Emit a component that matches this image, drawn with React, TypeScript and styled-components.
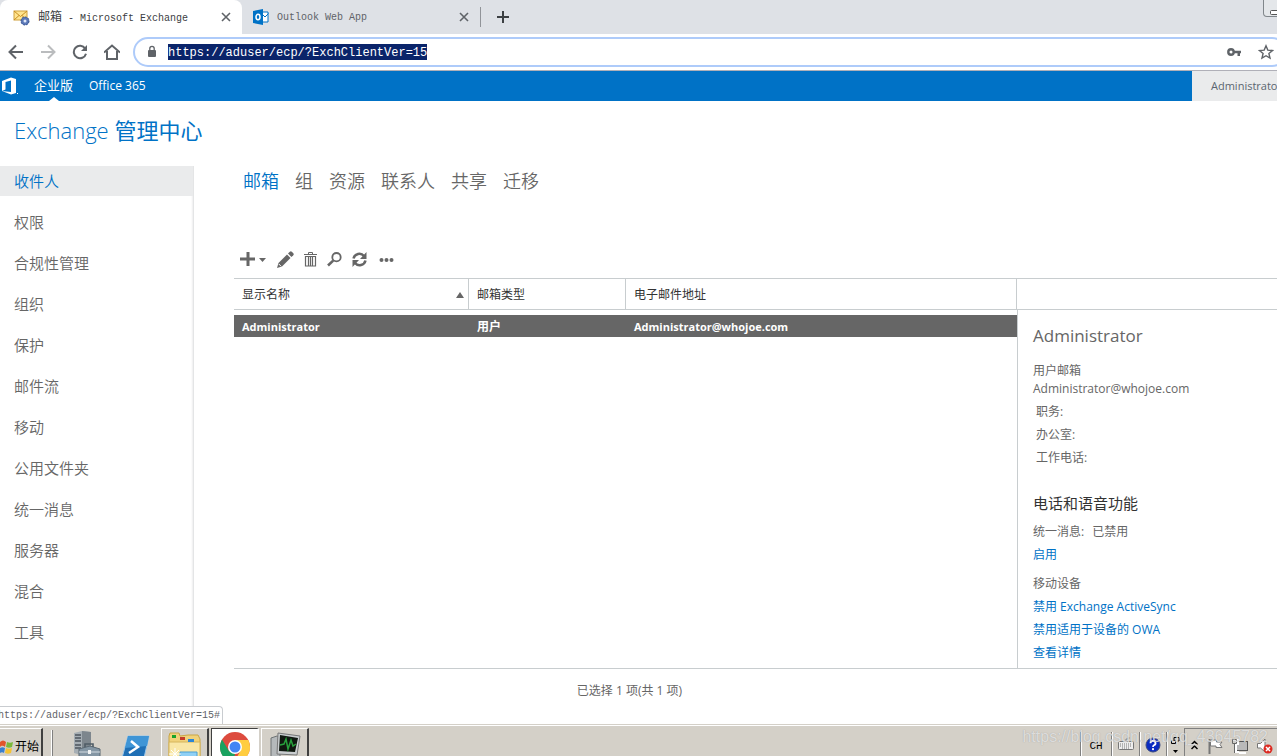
import React from 'react';
import styled, { createGlobalStyle, css } from 'styled-components';

const ui = `'Open Sans', 'Noto Sans CJK SC', sans-serif`;
const mono = `'Liberation Mono', 'Noto Sans CJK SC', monospace`;
const blue = '#0072c6';
const grey = '#666666';
const line = '#c8cdcf';
const face = '#d4d0c8';

const Global = createGlobalStyle`
  * { box-sizing: border-box; }
  html, body, #root { height: 100%; }
  body { margin: 0; overflow: hidden; background: #fff; font: 12px/18px ${ui}; color: ${grey}; }
  button { padding: 0; border: 0; background: none; font: inherit; color: inherit; cursor: pointer; }
  a { color: inherit; text-decoration: none; }
  svg { display: block; flex: none; }
  h1, h2, h3, p, ul, dl, dt, dd { margin: 0; padding: 0; font-weight: 400; list-style: none; }
`;

const Screen = styled.div`
  position: relative;
  display: flex;
  flex-direction: column;
  height: 100vh;
  overflow: hidden;
`;

/* browser window */
const TabStrip = styled.div`
  display: flex;
  flex: none;
  height: 34px;
  background: #dee1e6;
`;
const Tab = styled.div<{ $active?: boolean }>`
  display: flex;
  align-items: center;
  gap: 8px;
  width: ${p => (p.$active ? 242 : 238)}px;
  padding: 0 10px 0 ${p => (p.$active ? 13 : 11)}px;
  border-radius: 8px 8px 0 0;
  background: ${p => (p.$active ? '#fff' : 'transparent')};
  color: ${p => (p.$active ? '#3c4043' : '#5f6368')};
  font: 10px/18px ${mono};
  white-space: pre;
`;
const TabTitle = styled.span`
  flex: 1;
  padding-top: 2px;
`;
const TabCjk = styled.span`
  font-size: 12px;
`;
const IconButton = styled.button`
  display: flex;
  align-items: center;
  justify-content: center;
  color: #5f6368;
`;
const NewTab = styled(IconButton)`
  width: 44px;
  color: #3c4043;
`;
const TabDivider = styled.i`
  width: 1px;
  height: 20px;
  margin-top: 7px;
  background: #919499;
`;
const WindowControl = styled.button`
  position: absolute;
  top: 0;
  right: -12px;
  width: 26px;
  height: 17px;
  padding: 8px 0 0 6px;
  border: 1px solid #80868b;
  border-top: 0;
  border-radius: 0 0 4px 4px;
  background: #e4e7ea;
`;
const AddressRow = styled.div`
  display: flex;
  flex: none;
  align-items: center;
  gap: 16px;
  height: 37px;
  padding-left: 8px;
  border-bottom: 1px solid #b0b0b8;
`;
const AddressBox = styled.div`
  display: flex;
  flex: 1;
  align-items: center;
  gap: 16px;
  height: 30px;
  margin: 0 -10px 0 -3px;
  padding: 0 11px;
  border: 2px solid #aecbfa;
  border-radius: 15px;
`;
const UrlInput = styled.input`
  width: 36ch;
  height: 16px;
  margin: 0 auto 0 -6px;
  padding: 1px 0 0;
  border: 0;
  outline: 0;
  background: #0a246a;
  color: #fff;
  font: 12px/15px ${mono};
`;

/* suite header */
const SuiteBar = styled.header`
  display: flex;
  flex: none;
  align-items: center;
  height: 30px;
  overflow: hidden;
  background: ${blue};
  color: #fff;
  white-space: nowrap;
`;
const SuiteNav = styled.nav`
  display: flex;
  flex: 1;
  align-self: stretch;
  gap: 16px;
  margin-left: 15px;
  font-size: 12px;
  line-height: 29px;
`;
const SuiteLink = styled.a<{ $current?: boolean }>`
  position: relative;
  font-size: ${p => (p.$current ? 13 : 12)}px;
  ${p =>
    p.$current &&
    css`
      &::after {
        content: '';
        position: absolute;
        bottom: 0;
        left: 50%;
        margin-left: -5px;
        border: 5px solid transparent;
        border-top: 0;
        border-bottom: 4px solid #fff;
      }
    `}
`;
const UserButton = styled.button`
  flex: none;
  width: 85px;
  height: 30px;
  padding-left: 19px;
  overflow: hidden;
  background: #eaebec;
  color: #5a6670;
  font-size: 11px;
  text-align: left;
`;

/* page body */
const Title = styled.h1`
  flex: none;
  height: 65px;
  padding: 13px 14px 0;
  color: ${blue};
  font-size: 22px;
  font-weight: 300;
  line-height: 32px;
  b { font-weight: 400; }
`;
const Body = styled.div`
  display: flex;
  flex: 1;
  min-height: 0;
`;
const Sidebar = styled.nav`
  width: 194px;
  flex: none;
  border-right: 1px solid #e4e5e6;
  box-shadow: inset -2px 0 2px -1px #eeeeef;
`;
const SideLink = styled.a<{ $current?: boolean }>`
  display: block;
  height: 30px;
  margin-bottom: 11px;
  padding-left: 14px;
  background: ${p => (p.$current ? '#eaebec' : 'transparent')};
  color: ${p => (p.$current ? blue : grey)};
  font-size: 15px;
  font-weight: 350;
  line-height: 30px;
`;
const Main = styled.main`
  display: flex;
  flex: 1;
  flex-direction: column;
  min-width: 0;
  padding-left: 40px;
`;
const Pivot = styled.nav`
  display: flex;
  gap: 16px;
  height: 72px;
  padding-left: 9px;
  font-size: 18px;
  font-weight: 350;
  line-height: 30px;
`;
const PivotLink = styled.a<{ $current?: boolean }>`
  color: ${p => (p.$current ? blue : grey)};
`;
const Commands = styled.div`
  display: flex;
  align-items: center;
  gap: 10px;
  height: 40px;
  padding: 2px 0 0 6px;
`;
const Command = styled.button`
  display: flex;
  align-items: center;
  height: 20px;
  color: ${grey};
  &:last-child { margin-left: 2px; }
`;
const Split = styled.div`
  display: grid;
  flex: 1;
  grid-template-columns: minmax(0, 1fr) 260px;
  min-height: 0;
  border-top: 1px solid ${line};
  border-bottom: 1px solid ${line};
`;
const Grid = styled.table`
  width: 100%;
  align-self: start;
  border-collapse: separate;
  border-spacing: 0;
  table-layout: fixed;
  tbody::before { content: ''; display: block; height: 5px; }
`;
const HeadCell = styled.th<{ $width?: number }>`
  width: ${p => (p.$width ? p.$width + 'px' : 'auto')};
  height: 31px;
  padding: 2px 4px 0 8px;
  border-right: 1px solid ${line};
  border-bottom: 1px solid ${line};
  color: #333;
  font-weight: 400;
  text-align: left;
`;
const SortLabel = styled.span`
  display: flex;
  align-items: center;
  justify-content: space-between;
`;
const Cell = styled.td`
  height: 22px;
  padding: 2px 8px 0;
  background: ${grey};
  color: #fff;
  font-weight: 700;
`;
const Value = styled.span`
  font-size: 11px;
`;
const Side = styled.div`
  display: flex;
  flex-direction: column;
  min-height: 0;
`;
const SideHead = styled.div`
  flex: none;
  height: 31px;
  border-bottom: 1px solid ${line};
`;
const Details = styled.aside`
  flex: 1;
  min-height: 0;
  padding: 12px 15px 0;
  border-left: 1px solid ${line};
  overflow: hidden;
  line-height: 23px;
`;
const DetailName = styled.h2`
  margin-bottom: 12px;
  font-size: 17px;
  line-height: 28px;
`;
const Kind = styled.p`
  line-height: 18px;
`;
const Fields = styled.ul`
  margin: 2px 0 0 3px;
`;
const DetailHead = styled.h3`
  margin: 22px 0 5px;
  color: #333;
  font-size: 15px;
  line-height: 24px;
`;
const DetailLink = styled.a`
  display: block;
  color: ${blue};
`;
const Group = styled.section`
  margin-bottom: 6px;
`;
const State = styled.span`
  margin-left: 8px;
`;
const Footer = styled.footer`
  flex: none;
  height: 55px;
  padding: 12px 260px 0 8px;
  line-height: 20px;
  text-align: center;
`;
const StatusUrl = styled.div`
  position: absolute;
  left: -4px;
  bottom: 32px;
  height: 18px;
  padding: 0 2px 0 1px;
  border: 1px solid #c9ccd0;
  border-bottom: 0;
  border-radius: 0 4px 0 0;
  background: #fff;
  color: #5f6368;
  font: 10px/18px ${mono};
`;

/* desktop task bar */
const TaskBar = styled.div`
  display: flex;
  flex: none;
  height: 32px;
  padding-top: 4px;
  background: ${face};
  box-shadow: inset 0 1px ${face}, inset 0 2px #fff;
  color: #000;
  overflow: hidden;
`;
const StartButton = styled.button`
  display: flex;
  align-items: center;
  gap: 1px;
  width: 43px;
  height: 36px;
  border-top: 1px solid #fff;
  border-right: 2px solid #404040;
`;
const BarLine = styled.i`
  width: 2px;
  height: 30px;
  margin: 2px 0 0 8px;
  border-left: 1px solid #fff;
  border-right: 1px solid #808080;
`;
const Launch = styled.button`
  width: 30px;
  height: 30px;
  margin-left: 19px;
`;
const TaskButton = styled.button<{ $down?: boolean }>`
  display: flex;
  justify-content: center;
  width: 48px;
  height: 36px;
  margin-left: 2px;
  padding-top: 3px;
  border: 1px solid ${p => (p.$down ? '#404040' : '#fff')};
  border-right: 2px solid ${p => (p.$down ? '#fff' : '#404040')};
  background: ${p => (p.$down ? '#fff' : face)};
`;
const TaskGroup = styled.div`
  display: flex;
  flex: 1;
  margin-left: 8px;
`;
const Tray = styled.div`
  display: flex;
  flex: none;
  height: 36px;
`;
const TrayItem = styled.button<{ $width: number }>`
  display: flex;
  justify-content: center;
  width: ${p => p.$width}px;
  margin-top: 4px;
  padding-top: 5px;
  border-left: 1px solid #808080;
  box-shadow: inset 1px 0 #fff;
  font: 11px/18px ${mono};
`;
const Notify = styled.div`
  display: flex;
  gap: 9px;
  width: 93px;
  padding: 8px 0 0 6px;
  border-top: 1px solid #808080;
  border-left: 1px solid #808080;
`;
const Watermark = styled.div`
  position: absolute;
  right: 9px;
  bottom: 9px;
  color: rgba(240, 240, 240, 0.75);
  font: 16px/20px 'Liberation Sans', sans-serif;
  text-shadow: 0 0 1px rgba(120, 120, 120, 0.6);
  pointer-events: none;
`;

const MailIcon = () => (
  <svg width="17" height="17" viewBox="0 0 17 17">
    <rect x="1" y="2" width="13" height="9" fill="#ffe48f" stroke="#d0a03c" />
    <path d="M1 2l6.500 5.500L14 2M1 11l5-4.500M14 11L9 6.500" fill="none" stroke="#c98f22" />
    <circle cx="12" cy="12" r="4" fill="#5b78b8" stroke="#34528f" strokeDasharray="2 1" />
    <circle cx="12" cy="12" r="1.500" fill="#dfe8f8" />
  </svg>
);
const OutlookIcon = () => (
  <svg width="16" height="16" viewBox="0 0 16 16">
    <path d="M9 3h6v10H9z" fill="#fff" stroke="#0072c6" />
    <path d="M9 5l3 3 3.500-3.500" fill="none" stroke="#0072c6" />
    <path d="M0 2l10-2v16L0 14z" fill="#0072c6" />
    <ellipse cx="5" cy="8" rx="2" ry="2.700" fill="none" stroke="#fff" strokeWidth="1.500" />
  </svg>
);
const CloseIcon = () => (
  <svg width="12" height="12" viewBox="0 0 12 12" stroke="currentColor" strokeWidth="1.600">
    <path d="M2 2l8 8M10 2l-8 8" />
  </svg>
);
const Nav = ({ d, color = '#5f6368' }: { d: string; color?: string }) => (
  <svg width="16" height="16" viewBox="0 0 16 16" fill="none" stroke={color} strokeWidth="2">
    <path d={d} />
  </svg>
);
const ReloadIcon = () => (
  <svg width="16" height="16" viewBox="0 0 16 16">
    <path d="M13.200 4.600A6.200 6.200 0 1 0 14 9.700" fill="none" stroke="#5f6368" strokeWidth="2" />
    <path d="M15 1v6H9z" fill="#5f6368" />
  </svg>
);
const LockIcon = () => (
  <svg width="12" height="14" viewBox="0 0 12 14">
    <rect x="2" y="5" width="8" height="7" rx="1" fill="#5f6368" />
    <path d="M3.800 6V3.500a2.200 2.200 0 0 1 4.400 0V6" fill="none" stroke="#5f6368" strokeWidth="1.300" />
  </svg>
);
const KeyIcon = () => (
  <svg width="16" height="10" viewBox="0 0 16 10">
    <circle cx="5" cy="5" r="2.700" fill="none" stroke="#5f6368" strokeWidth="2.400" />
    <path d="M8 3.800h7v2.400h-1V9h-2.500V6.200H8z" fill="#5f6368" />
  </svg>
);
const StarIcon = () => (
  <svg width="16" height="16" viewBox="0 0 16 16">
    <path d="M8 1.800l1.800 4.300 4.700.4-3.600 3 1.100 4.600L8 11.700l-4 2.400 1.100-4.600-3.600-3 4.700-.4z" fill="none" stroke="#5f6368" strokeWidth="1.400" />
  </svg>
);
const OfficeIcon = () => (
  <svg width="19" height="18" viewBox="0 0 19 18">
    <path d="M2 4l9-3.500L16 2v14l-5 1.500L2 14l9 1V3.500L5.500 5v7.500L2 14z" fill="#fff" />
    <path d="M17 16h1v1h-1z" fill="#fff" />
  </svg>
);
const AddIcon = () => (
  <svg width="27" height="16" viewBox="0 0 27 16" fill={grey}>
    <path d="M6.500 1h3v5.500H15v3H9.500V15h-3V9.500H0v-3h6.500z" />
    <path d="M19 7h7l-3.500 4z" />
  </svg>
);
const PencilIcon = () => (
  <svg width="17" height="17" viewBox="0 0 17 17" fill={grey}>
    <path d="M0 17l1.500-5L10 3.500 13.500 7 5 15.500z" />
    <path d="M11 2.600L12.800.8a1.500 1.500 0 0 1 2 0l1.500 1.500a1.500 1.500 0 0 1 0 2L14.500 6z" />
    <path d="M1.800 13l2.300 2.300" stroke="#fff" strokeWidth="1" />
  </svg>
);
const TrashIcon = () => (
  <svg width="13" height="15" viewBox="0 0 13 15" fill="none" stroke={grey}>
    <path d="M0 2.500h13M4.500 2V.5h4V2" />
    <path d="M1.500 4.500h10V14h-10zM4.500 5v9M6.500 5v9M8.500 5v9" strokeWidth="1.200" />
  </svg>
);
const SearchIcon = () => (
  <svg width="15" height="15" viewBox="0 0 15 15" fill="none" stroke={grey}>
    <circle cx="9.500" cy="5.200" r="4.200" strokeWidth="1.800" />
    <path d="M6.200 8.600L1 13.500" strokeWidth="2.600" />
  </svg>
);
const RefreshIcon = () => (
  <svg width="15" height="15" viewBox="0 0 15 15">
    <path d="M1.500 6.500A6 6 0 0 1 12 4M13.500 8.500A6 6 0 0 1 3 11" fill="none" stroke={grey} strokeWidth="2.500" />
    <path d="M14.500 0v7H8zM.5 15V8H7z" fill={grey} />
  </svg>
);
const MoreIcon = () => (
  <svg width="16" height="6" viewBox="0 0 16 6" fill={grey}>
    <circle cx="2.500" cy="4" r="2" />
    <circle cx="7.500" cy="4" r="2" />
    <circle cx="12.500" cy="4" r="2" />
  </svg>
);
const FlagIcon = () => (
  <svg width="14" height="16" viewBox="0 0 14 16">
    <path d="M0 3c2-2 4-2 6 0L5 8C3 6 1 7 0 8z" fill="#e2542a" />
    <path d="M7 3c2 1 4 1 6 0l-1 5c-2 1-4 1-6 0z" fill="#7ab83a" />
    <path d="M0 9c2-1 3-1 5 0l-1 5c-1-1-3-1-4 0z" fill="#3a7fd0" />
    <path d="M6 9c2 1 4 1 6 0l-1 5c-2 1-4 1-6 0z" fill="#f6c332" />
  </svg>
);
const ServerIcon = () => (
  <svg width="30" height="30" viewBox="0 0 30 30">
    <path d="M2 5l8-2 9 1v21l-10 2-7-2z" fill="#a6aeb4" />
    <path d="M10 3l9 1v21l-9 2z" fill="#7d868d" />
    <path d="M3 7h6M3 10h6M3 13h6M3 17h6M3 20h6" stroke="#4d565d" strokeWidth="1.500" />
    <path d="M7 21l11-3 10 3v9H7z" fill="#8496a4" stroke="#5a6873" />
    <path d="M13 19v-3h8v3" fill="none" stroke="#4f5c66" strokeWidth="1.600" />
    <path d="M7 24h21" stroke="#d4dce2" />
    <path d="M16 22h3v4h-3z" fill="#f1f3f4" />
  </svg>
);
const ShellIcon = () => (
  <svg width="30" height="30" viewBox="0 0 30 30">
    <path d="M7 8h21l-5 22H1z" fill="#1f6fb5" stroke="#9cc8ea" />
    <path d="M7 8h21l-2 10L4 20z" fill="#3f95d6" />
    <path d="M10 13l7 6-9 6" fill="none" stroke="#fff" strokeWidth="2.500" />
  </svg>
);
const FolderIcon = () => (
  <svg width="34" height="30" viewBox="0 0 34 30">
    <path d="M1 4l1-3h9l1 3 8-1h10l2 4v23H1z" fill="#f0d27a" stroke="#c9a545" />
    <path d="M1 10h31v20H1z" fill="#f9e7a6" stroke="#d6b65c" />
    <path d="M4 3h4v3H4z" fill="#18a32c" />
    <path d="M12 5h5v3h-5z" fill="#c43c2a" />
    <path d="M20 7h6v3h-6z" fill="#2b86d6" />
    <path d="M12 20h17v10H12z" fill="#8fd0f5" stroke="#4b9fd4" />
    <path d="M7 16v12M1 22h12M3 18l8 8M11 18l-8 8" stroke="#fff" />
  </svg>
);
const ChromeIcon = () => (
  <svg width="30" height="30" viewBox="0 0 30 30">
    <circle cx="15" cy="15" r="15" fill="#dd4b3e" />
    <path d="M15 15H30A15 15 0 0 1 14 30l7-12z" fill="#ffcd40" />
    <path d="M2 7.500L9 19l6 3-2 8A15 15 0 0 1 2 7.500z" fill="#1aa260" />
    <path d="M15 8h13.300A15 15 0 0 1 30 15l-1 4H20z" fill="#ffcd40" />
    <circle cx="15" cy="15" r="7" fill="#fff" />
    <circle cx="15" cy="15" r="5.500" fill="#4285f4" />
  </svg>
);
const MonitorIcon = () => (
  <svg width="32" height="30" viewBox="0 0 32 30">
    <path d="M2 6l6-2 3 1v20H2z" fill="#b5b9bb" stroke="#6e7375" />
    <path d="M9 1l22 3-3 19-20-1z" fill="#c9cdcf" stroke="#777" />
    <path d="M11 3l18 3-3 14-16-1z" fill="#101810" />
    <path d="M11 13l4-1 2-5 2 10 3-9 2 6 3-2" fill="none" stroke="#27a03b" strokeWidth="1.500" />
    <path d="M10 25h16l2 4H8z" fill="#a3a7a9" />
  </svg>
);
const KeyboardIcon = () => (
  <svg width="16" height="13" viewBox="0 0 16 13">
    <path d="M8 4V2h3V0" fill="none" stroke="#888" />
    <rect x="0.500" y="4.500" width="15" height="8" rx="1" fill="#eee" stroke="#777" />
    <path d="M2 7h12M2 9h12M4 11h8" stroke="#777" strokeDasharray="1 1" />
  </svg>
);
const HelpIcon = () => (
  <svg width="16" height="16" viewBox="0 0 16 16">
    <circle cx="8" cy="8" r="7" fill="#0a2bc0" stroke="#3a4a80" />
    <path d="M5.500 6.200a2.500 2.300 0 1 1 3.500 2c-.8.400-1 .8-1 1.800" fill="none" stroke="#fff" strokeWidth="1.800" />
    <circle cx="8" cy="12.200" r="1.100" fill="#fff" />
  </svg>
);
const BarOptions = () => (
  <svg width="9" height="17" viewBox="0 0 9 17">
    <path d="M3 3V.5h5V4H6M.5 3.500h4v3h-4z" fill="none" stroke="#000" />
    <path d="M2 13h5l-2.500 3z" />
  </svg>
);
const ChevronUp = () => (
  <svg width="7" height="16" viewBox="0 0 7 16" fill="none" stroke="#000" strokeWidth="1.500">
    <path d="M.5 7.500l3-3 3 3M.5 12l3-3 3 3" />
  </svg>
);
const TrayFlag = () => (
  <svg width="16" height="18" viewBox="0 0 16 18">
    <path d="M2.500 2v15" stroke="#777" strokeWidth="2" />
    <path d="M3.500 3h6v2h5.500l-2 2.500 2 3H9V9H3.500z" fill="#fff" stroke="#777" />
  </svg>
);
const NetworkIcon = () => (
  <svg width="16" height="18" viewBox="0 0 16 18">
    <rect x="4.500" y="4.500" width="11" height="9" fill="#b9b9b9" stroke="#555" />
    <path d="M1 3h5v4H4v8h3M7 16h7" fill="none" stroke="#fff" strokeWidth="2" />
    <path d="M.5 2.500h4v4h-4zM2.500 7v9" fill="none" stroke="#666" />
  </svg>
);
const VolumeIcon = () => (
  <svg width="16" height="18" viewBox="0 0 16 18">
    <path d="M.5 6.500h3L8 2v13l-4.500-4h-3z" fill="#fff" stroke="#777" />
    <circle cx="11" cy="12" r="4.500" fill="#dd2b22" />
    <path d="M9 10l4 4M13 10l-4 4" stroke="#fff" strokeWidth="1.500" />
  </svg>
);

const sections = ['收件人', '权限', '合规性管理', '组织', '保护', '邮件流', '移动', '公用文件夹', '统一消息', '服务器', '混合', '工具'];
const pivots = ['邮箱', '组', '资源', '联系人', '共享', '迁移'];
const fields = ['职务:', '办公室:', '工作电话:'];

export default function App() {
  return (
    <Screen>
      <Global />
      <TabStrip>
        <Tab $active>
          <MailIcon />
          <TabTitle><TabCjk>邮箱</TabCjk> - Microsoft Exchange</TabTitle>
          <IconButton aria-label="Close tab"><CloseIcon /></IconButton>
        </Tab>
        <Tab>
          <OutlookIcon />
          <TabTitle>Outlook Web App</TabTitle>
          <IconButton aria-label="Close tab"><CloseIcon /></IconButton>
        </Tab>
        <TabDivider />
        <NewTab aria-label="New tab">
          <svg width="12" height="12" viewBox="0 0 12 12" stroke="currentColor" strokeWidth="2"><path d="M6 0v12M0 6h12" /></svg>
        </NewTab>
        <WindowControl aria-label="Minimize">
          <svg width="10" height="5" viewBox="0 0 10 5"><rect x="0.500" y="0.500" width="9" height="4" rx="1" fill="#fff" stroke="#555" /></svg>
        </WindowControl>
      </TabStrip>
      <AddressRow>
        <IconButton aria-label="Back"><Nav d="M15 8H2M8 1.500L1.500 8 8 14.500" /></IconButton>
        <IconButton aria-label="Forward"><Nav color="#babcbe" d="M1 8h13M8 1.500L14.500 8 8 14.500" /></IconButton>
        <IconButton aria-label="Reload"><ReloadIcon /></IconButton>
        <IconButton aria-label="Home"><Nav d="M0 8.500L8 1.500l8 7M3 7v8h10V7" /></IconButton>
        <AddressBox>
          <LockIcon />
          <UrlInput aria-label="Address" defaultValue="https://aduser/ecp/?ExchClientVer=15" spellCheck={false} />
          <IconButton aria-label="Passwords"><KeyIcon /></IconButton>
          <IconButton aria-label="Bookmark"><StarIcon /></IconButton>
        </AddressBox>
      </AddressRow>

      <SuiteBar>
        <OfficeIcon />
        <SuiteNav>
          <SuiteLink href="#" $current>企业版</SuiteLink>
          <SuiteLink href="#">Office 365</SuiteLink>
        </SuiteNav>
        <UserButton>Administrator</UserButton>
      </SuiteBar>
      <Title>Exchange <b>管理中心</b></Title>
      <Body>
        <Sidebar>
          {sections.map((s, i) => <SideLink key={s} href="#" $current={i === 0}>{s}</SideLink>)}
        </Sidebar>
        <Main>
          <Pivot>
            {pivots.map((s, i) => <PivotLink key={s} href="#" $current={i === 0}>{s}</PivotLink>)}
          </Pivot>
          <Commands>
            <Command aria-label="新建"><AddIcon /></Command>
            <Command aria-label="编辑"><PencilIcon /></Command>
            <Command aria-label="删除"><TrashIcon /></Command>
            <Command aria-label="搜索"><SearchIcon /></Command>
            <Command aria-label="刷新"><RefreshIcon /></Command>
            <Command aria-label="更多"><MoreIcon /></Command>
          </Commands>
          <Split>
            <Grid>
              <thead>
                <tr>
                  <HeadCell $width={235}>
                    <SortLabel>显示名称<svg width="8" height="6" viewBox="0 0 8 6"><path d="M4 0l4 6H0z" fill={grey} /></svg></SortLabel>
                  </HeadCell>
                  <HeadCell $width={157}>邮箱类型</HeadCell>
                  <HeadCell>电子邮件地址</HeadCell>
                </tr>
              </thead>
              <tbody>
                <tr>
                  <Cell><Value>Administrator</Value></Cell>
                  <Cell>用户</Cell>
                  <Cell><Value>Administrator@whojoe.com</Value></Cell>
                </tr>
              </tbody>
            </Grid>
            <Side>
              <SideHead />
              <Details>
                <DetailName>Administrator</DetailName>
                <Kind>用户邮箱</Kind>
                <Kind>Administrator@whojoe.com</Kind>
                <Fields>{fields.map(f => <li key={f}>{f}</li>)}</Fields>
                <DetailHead>电话和语音功能</DetailHead>
                <Group>
                  <p>统一消息:<State>已禁用</State></p>
                  <DetailLink href="#">启用</DetailLink>
                </Group>
                <Group>
                  <p>移动设备</p>
                  <DetailLink href="#">禁用 Exchange ActiveSync</DetailLink>
                  <DetailLink href="#">禁用适用于设备的 OWA</DetailLink>
                  <DetailLink href="#">查看详情</DetailLink>
                </Group>
              </Details>
            </Side>
          </Split>
          <Footer>已选择 1 项(共 1 项)</Footer>
        </Main>
      </Body>
      <StatusUrl>https://aduser/ecp/?ExchClientVer=15#</StatusUrl>

      <TaskBar>
        <StartButton><FlagIcon />开始</StartButton>
        <BarLine />
        <Launch aria-label="Server Manager"><ServerIcon /></Launch>
        <Launch aria-label="PowerShell"><ShellIcon /></Launch>
        <TaskGroup>
          <TaskButton aria-label="Explorer"><FolderIcon /></TaskButton>
          <TaskButton aria-label="Chrome" $down><ChromeIcon /></TaskButton>
          <TaskButton aria-label="Task Manager"><MonitorIcon /></TaskButton>
        </TaskGroup>
        <Tray>
          <TrayItem $width={31}>CH</TrayItem>
          <TrayItem $width={28} aria-label="Keyboard"><KeyboardIcon /></TrayItem>
          <TrayItem $width={27} aria-label="Help"><HelpIcon /></TrayItem>
          <TrayItem $width={18} aria-label="Options"><BarOptions /></TrayItem>
          <Notify>
            <ChevronUp />
            <TrayFlag />
            <NetworkIcon />
            <VolumeIcon />
          </Notify>
        </Tray>
      </TaskBar>
      <Watermark>https://blog.csdn.net/qq_43645782</Watermark>
    </Screen>
  );
}
